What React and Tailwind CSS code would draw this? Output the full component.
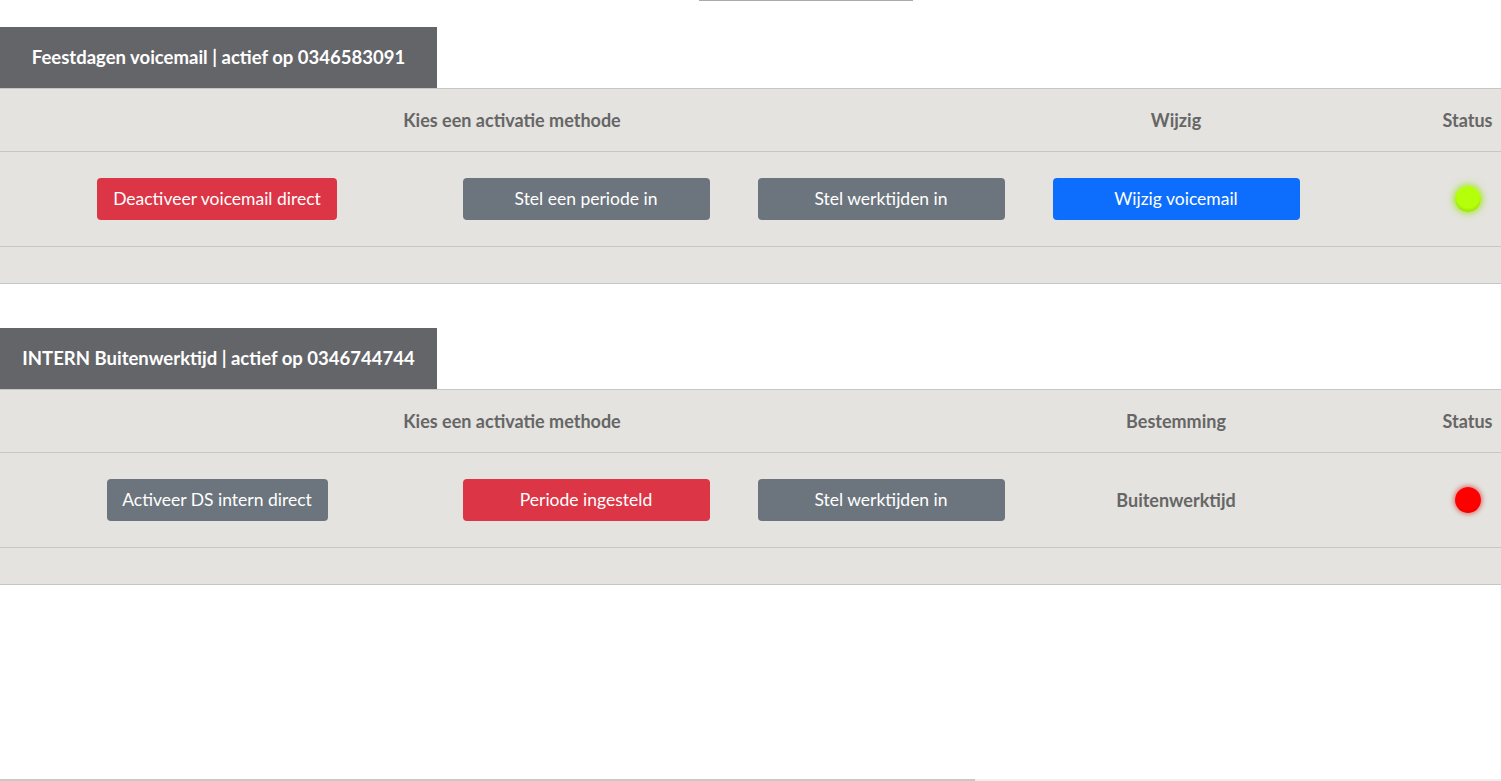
import React from 'react';

const sections = [
  {
    title: 'Feestdagen voicemail | actief op 0346583091',
    col4: 'Wijzig',
    first: { label: 'Deactiveer voicemail direct', tone: 'red', width: 'w-[240px]' },
    second: { label: 'Stel een periode in', tone: 'gray' },
    fourth: { type: 'button', label: 'Wijzig voicemail' },
    status: 'on',
  },
  {
    title: 'INTERN Buitenwerktijd | actief op 0346744744',
    col4: 'Bestemming',
    first: { label: 'Activeer DS intern direct', tone: 'gray', width: 'w-[221px]' },
    second: { label: 'Periode ingesteld', tone: 'red' },
    fourth: { type: 'text', label: 'Buitenwerktijd' },
    status: 'off',
  },
];

const tones = {
  red: 'bg-[#dc3545]',
  gray: 'bg-[#6c757d]',
  blue: 'bg-[#0d6efd]',
};

function Btn({ label, tone, width = 'w-[247px]' }) {
  return (
    <button
      className={`${tones[tone]} ${width} h-[42px] rounded-[4px] text-white text-[17.5px] leading-none flex items-center justify-center`}
    >
      {label}
    </button>
  );
}

function StatusDot({ on }) {
  return on ? (
    <span className="block w-[26px] h-[26px] rounded-full bg-[radial-gradient(circle_at_50%_40%,#b4ff0a_55%,#7fc400_100%)] shadow-[0_0_6px_2px_rgba(150,230,0,0.7)]" />
  ) : (
    <span className="block w-[26px] h-[26px] rounded-full bg-[radial-gradient(circle_at_50%_40%,#ff0000_60%,#d40000_100%)] shadow-[0_0_5px_1px_rgba(200,0,0,0.55)]" />
  );
}

function Section({ s }) {
  return (
    <div>
      <div className="w-[437px] h-[61px] bg-[#646569] text-white font-bold text-[18.5px] flex items-center justify-center">
        {s.title}
      </div>
      <div className="bg-[#e4e3df] border-y border-[#c6c6c6]">
        <div className="grid grid-cols-[1024px_304px_1fr_66px] h-[63px] items-center text-[#666] font-bold text-[18px] border-b border-[#c6c6c6]">
          <div className="text-center">Kies een activatie methode</div>
          <div className="text-center">{s.col4}</div>
          <div />
          <div className="text-center pr-[1px]">Status</div>
        </div>
        <div className="grid grid-cols-[434px_304px_286px_304px_1fr_66px] h-[95px] items-center border-b border-[#c6c6c6]">
          <div className="flex justify-center">
            <Btn label={s.first.label} tone={s.first.tone} width={s.first.width} />
          </div>
          <div className="flex justify-center">
            <Btn label={s.second.label} tone={s.second.tone} />
          </div>
          <div className="flex justify-center">
            <Btn label="Stel werktijden in" tone="gray" />
          </div>
          <div className="flex justify-center">
            {s.fourth.type === 'button' ? (
              <Btn label={s.fourth.label} tone="blue" />
            ) : (
              <span className="text-[#666] font-bold text-[18px]">{s.fourth.label}</span>
            )}
          </div>
          <div />
          <div className="flex justify-center">
            <StatusDot on={s.status === 'on'} />
          </div>
        </div>
        <div className="h-[36px]" />
      </div>
    </div>
  );
}

export default function App() {
  return (
    <div className="relative w-[1501px] h-[781px] bg-white overflow-hidden font-['Lato','Open_Sans',sans-serif]">
      <div className="absolute top-0 left-[699px] w-[214px] h-[1px] bg-[#aaaaad]" />
      <div className="pt-[27px] flex flex-col gap-[44px]">
        {sections.map((s) => (
          <Section key={s.title} s={s} />
        ))}
      </div>
      <div className="absolute bottom-0 left-0 w-[975px] h-[2px] bg-[#c8c8c8]" />
      <div className="absolute bottom-0 left-[975px] right-0 h-[2px] bg-[#efefef]" />
    </div>
  );
}
